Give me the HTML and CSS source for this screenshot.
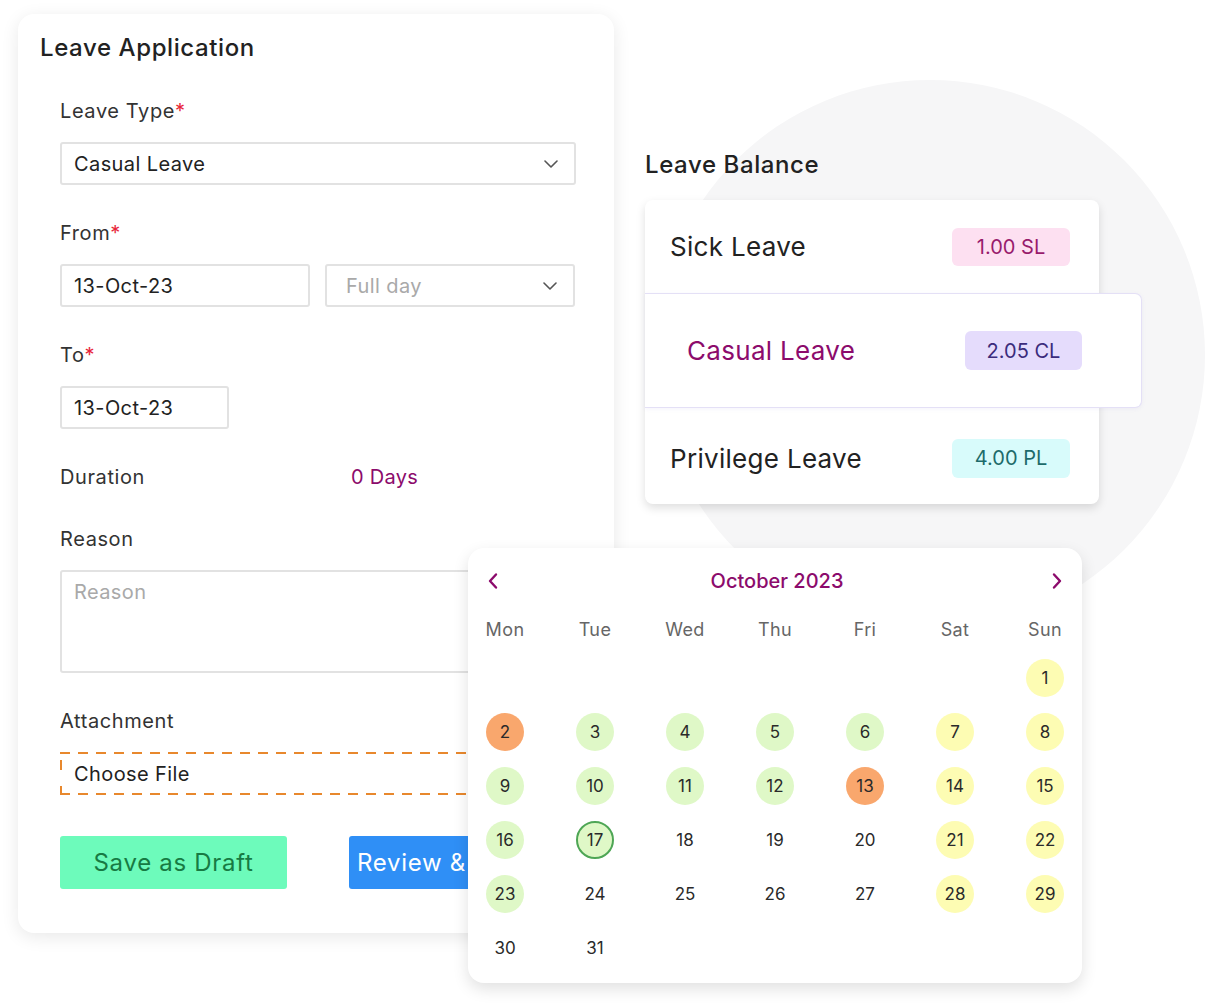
FILE: index.html
```html
<!DOCTYPE html>
<html lang="en">
<head>
<meta charset="utf-8">
<title>Leave Application</title>
<link rel="stylesheet" href="styles.css">
</head>
<body>
<div class="stage">
  <div class="bg-circle"></div>

  <section class="app-card">
    <h1 class="app-title">Leave Application</h1>
    <div class="form">
      <label class="label">Leave Type<span class="req">*</span></label>
      <div class="field select">
        <span class="value">Casual Leave</span>
        <svg class="chev" width="14" height="8" viewBox="0 0 14 8"><path d="M1 1l6 6 6-6" fill="none" stroke="#555" stroke-width="1.6" stroke-linecap="round" stroke-linejoin="round"/></svg>
      </div>

      <label class="label">From<span class="req">*</span></label>
      <div class="row2">
        <div class="field"><span class="value">13-Oct-23</span></div>
        <div class="field select select-day">
          <span class="placeholder">Full day</span>
          <svg class="chev" width="14" height="8" viewBox="0 0 14 8"><path d="M1 1l6 6 6-6" fill="none" stroke="#555" stroke-width="1.6" stroke-linecap="round" stroke-linejoin="round"/></svg>
        </div>
      </div>

      <label class="label">To<span class="req">*</span></label>
      <div class="field short"><span class="value">13-Oct-23</span></div>

      <div class="duration">
        <span class="duration-label">Duration</span>
        <span class="duration-value">0 Days</span>
      </div>

      <label class="label reason-label">Reason</label>
      <div class="field textarea"><span class="placeholder">Reason</span></div>

      <label class="label">Attachment</label>
      <div class="field file"><span class="value">Choose File</span></div>

      <div class="buttons">
        <button class="btn btn-draft">Save as Draft</button>
        <button class="btn btn-review">Review &amp; Submit</button>
      </div>
    </div>
  </section>

  <section class="balance">
    <h2 class="balance-title">Leave Balance</h2>
    <div class="balance-card">
      <div class="bal-row">
        <span class="bal-name">Sick Leave</span>
        <span class="badge badge-sl">1.00 SL</span>
      </div>
      <div class="bal-row active">
        <span class="bal-name">Casual Leave</span>
        <span class="badge badge-cl">2.05 CL</span>
      </div>
      <div class="bal-row last">
        <span class="bal-name">Privilege Leave</span>
        <span class="badge badge-pl">4.00 PL</span>
      </div>
    </div>
  </section>

  <div class="calendar">
    <div class="cal-head">
      <svg class="nav" width="14" height="18" viewBox="0 0 14 18"><path d="M10 2.5L4 9l6 6.5" fill="none" stroke="#8c0b6c" stroke-width="2.4" stroke-linecap="round" stroke-linejoin="round"/></svg>
      <span class="cal-month">October 2023</span>
      <svg class="nav" width="14" height="18" viewBox="0 0 14 18"><path d="M4 2.5L10 9l-6 6.5" fill="none" stroke="#8c0b6c" stroke-width="2.4" stroke-linecap="round" stroke-linejoin="round"/></svg>
    </div>
    <div class="cal-grid">
      <span class="dow">Mon</span><span class="dow">Tue</span><span class="dow">Wed</span><span class="dow">Thu</span><span class="dow">Fri</span><span class="dow">Sat</span><span class="dow">Sun</span>

      <span class="day"></span><span class="day"></span><span class="day"></span><span class="day"></span><span class="day"></span><span class="day"></span><span class="day yellow">1</span>

      <span class="day orange">2</span><span class="day green">3</span><span class="day green">4</span><span class="day green">5</span><span class="day green">6</span><span class="day yellow">7</span><span class="day yellow">8</span>

      <span class="day green">9</span><span class="day green">10</span><span class="day green">11</span><span class="day green">12</span><span class="day orange">13</span><span class="day yellow">14</span><span class="day yellow">15</span>

      <span class="day green">16</span><span class="day green today">17</span><span class="day">18</span><span class="day">19</span><span class="day">20</span><span class="day yellow">21</span><span class="day yellow">22</span>

      <span class="day green">23</span><span class="day">24</span><span class="day">25</span><span class="day">26</span><span class="day">27</span><span class="day yellow">28</span><span class="day yellow">29</span>

      <span class="day">30</span><span class="day">31</span><span class="day"></span><span class="day"></span><span class="day"></span><span class="day"></span><span class="day"></span>
    </div>
  </div>
</div>
</body>
</html>
```

FILE: styles.css
```css
* { box-sizing: border-box; }

html, body {
  margin: 0;
  padding: 0;
  background: #ffffff;
}

body {
  font-family: "Inter", "Open Sans", "DejaVu Sans", sans-serif;
  color: #222;
  width: 1205px;
  height: 1008px;
  overflow: hidden;
}

.stage {
  position: relative;
  width: 1205px;
  height: 1008px;
  display: flex;
  align-items: flex-start;
  padding: 14px 0 0 18px;
}

.bg-circle {
  position: absolute;
  left: 655px;
  top: 80px;
  width: 550px;
  height: 550px;
  border-radius: 50%;
  background: #f6f6f7;
}

/* ---------- Leave application card ---------- */
.app-card {
  position: relative;
  width: 596px;
  height: 919px;
  background: #fff;
  border-radius: 16px;
  box-shadow: 0 4px 18px rgba(0, 0, 0, 0.09);
  padding: 19px 38px 0 22px;
}

.app-title {
  margin: 0;
  font-size: 24px;
  line-height: 30px;
  font-weight: 500;
  letter-spacing: 0.6px;
  color: #222;
}

.form {
  padding-left: 20px;
  margin-top: 36px;
  display: flex;
  flex-direction: column;
}

.label {
  display: block;
  font-size: 20px;
  line-height: 24px;
  letter-spacing: 0.6px;
  color: #333;
  margin-bottom: 19px;
}

.req { color: #e8263a; }

.field {
  height: 43px;
  border: 2px solid #e2e2e2;
  border-radius: 3px;
  display: flex;
  align-items: center;
  padding: 0 12px;
  font-size: 20px;
  letter-spacing: 0.4px;
  margin-bottom: 36px;
  background: #fff;
}

.value { color: #222; }
.placeholder { color: #a9a9a9; }

.select { justify-content: space-between; padding-right: 16px; }
.select-day { padding-left: 19px; }
.chev { flex: none; }

.row2 {
  display: grid;
  grid-template-columns: 250px 250px;
  column-gap: 15px;
}

.short { width: 169px; }

.duration {
  display: flex;
  font-size: 20px;
  line-height: 24px;
  letter-spacing: 0.6px;
  color: #333;
  margin-bottom: 38px;
}

.duration-label { width: 291px; }
.duration-value { color: #8c0b6c; letter-spacing: 0.3px; }

.textarea {
  height: 103px;
  align-items: flex-start;
  padding-top: 8px;
}

.file {
  border: none;
  border-radius: 0;
  margin-bottom: 41px;
  padding-left: 14px;
  background:
    repeating-linear-gradient(90deg, #e8882d 0 10px, transparent 10px 18px) left top / 100% 2px no-repeat,
    repeating-linear-gradient(90deg, #e8882d 0 10px, transparent 10px 18px) left bottom / 100% 2px no-repeat,
    repeating-linear-gradient(180deg, transparent 0 8px, #e8882d 8px 18px, transparent 18px 26px) left top / 2px 100% no-repeat,
    #fff;
}

.buttons {
  display: flex;
  justify-content: space-between;
}

.btn {
  width: 227px;
  height: 53px;
  border: none;
  border-radius: 3px;
  font-family: inherit;
  font-size: 24px;
  letter-spacing: 0.7px;
  white-space: nowrap;
  overflow: hidden;
  padding: 0;
}

.btn-draft {
  background: #6dfbbb;
  color: #177a43;
}

.btn-review {
  background: #2f8ff6;
  color: #fff;
  text-align: left;
  padding-left: 8px;
}

/* ---------- Leave balance ---------- */
.balance {
  position: relative;
  margin-left: 31px;
  margin-top: 136px;
  width: 454px;
}

.balance-title {
  margin: 0 0 20px;
  font-size: 24px;
  line-height: 30px;
  font-weight: 500;
  letter-spacing: 0.6px;
  color: #222;
}

.balance-card {
  background: #fff;
  border-radius: 8px;
  box-shadow: 0 4px 10px rgba(0, 0, 0, 0.13);
}

.bal-row {
  display: flex;
  align-items: center;
  justify-content: space-between;
  height: 93px;
  padding: 0 29px 0 25px;
}

.bal-row.last { height: 96px; padding-top: 4px; }

.bal-row.active {
  height: 115px;
  margin-right: -43px;
  padding: 0 59px 0 42px;
  background: #fff;
  border: 1.5px solid #e4e0f6;
  border-left: none;
  border-radius: 0 7px 7px 0;
  box-shadow: 0 1px 4px rgba(120, 100, 200, 0.08);
}

.bal-name {
  font-size: 26px;
  letter-spacing: 0.3px;
  color: #222;
}

.active .bal-name { color: #8c0b6c; }

.badge {
  width: 118px;
  height: 38px;
  border-radius: 6px;
  display: flex;
  align-items: center;
  justify-content: center;
  font-size: 20px;
}

.badge-sl { background: #fde0f1; color: #981b6c; }
.badge-cl { background: #e5dcfc; color: #3b2c7c; height: 39px; width: 117px; }
.badge-pl { background: #d8fbfb; color: #1d6b6a; height: 39px; }

/* ---------- Calendar ---------- */
.calendar {
  position: absolute;
  left: 468px;
  top: 548px;
  width: 614px;
  height: 435px;
  background: #fff;
  border-radius: 16px;
  box-shadow: 0 6px 16px rgba(0, 0, 0, 0.12);
  padding: 20px 18px 0 18px;
}

.cal-head {
  display: flex;
  align-items: center;
  justify-content: space-between;
  height: 26px;
}

.cal-month {
  font-size: 20px;
  font-weight: 500;
  color: #8c0b6c;
  margin-left: 4px;
}

.cal-grid {
  margin-top: 13px;
  display: grid;
  grid-template-columns: repeat(7, 38px);
  justify-content: space-between;
  grid-auto-rows: 54px;
  grid-template-rows: 44px;
}

.dow {
  display: flex;
  align-items: center;
  justify-content: center;
  font-size: 18px;
  letter-spacing: 0.4px;
  color: #666;
  white-space: nowrap;
}

.day {
  align-self: center;
  width: 38px;
  height: 38px;
  border-radius: 50%;
  display: flex;
  align-items: center;
  justify-content: center;
  font-size: 17px;
  color: #2a2a2a;
}

.day.green { background: #dff8c7; }
.day.yellow { background: #fdfcb3; }
.day.orange { background: #f9a76d; }
.day.today { border: 2px solid #4ea655; }
```
